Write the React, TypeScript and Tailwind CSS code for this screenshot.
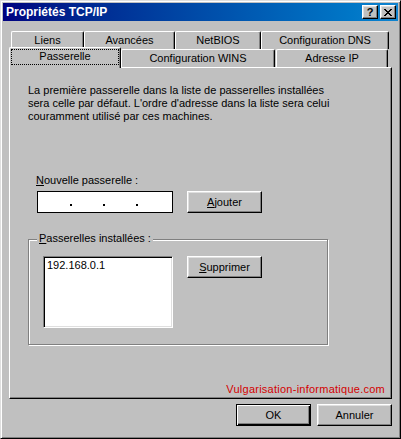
import React from 'react';

const raised =
  'border border-t-white border-l-white border-r-black border-b-black shadow-[inset_-1px_-1px_0_#808080,inset_1px_1px_0_#dfdfdf]';
const sunken =
  'border border-t-[#808080] border-l-[#808080] border-r-white border-b-white shadow-[inset_1px_1px_0_#000,inset_-1px_-1px_0_#dfdfdf]';

const Button = ({ children, isDefault = false, className = '' }: { children: React.ReactNode; isDefault?: boolean; className?: string }) => (
  <button
    className={`flex items-center justify-center bg-[#c0c0c0] text-black text-[11px] leading-[13px] ${
      isDefault
        ? 'border border-black shadow-[inset_1px_1px_0_white,inset_-1px_-1px_0_#000,inset_-2px_-2px_0_#808080]'
        : raised
    } ${className}`}
  >
    {children}
  </button>
);

// onglets arrière / avant
const backTabs = [
  { label: 'Liens', w: 'w-[73px]' },
  { label: 'Avancées', w: 'w-[91px]' },
  { label: 'NetBIOS', w: 'w-[86px]' },
  { label: 'Configuration DNS', w: 'w-[128px]' },
];

const tabCls =
  'flex items-center justify-center h-[18px] bg-[#c0c0c0] border-l border-t border-r border-l-white border-t-white border-r-black rounded-tl-[2px] rounded-tr-[2px] shadow-[inset_-1px_0_0_#808080] text-[11px] leading-[13px]';

export default function App() {
  return (
    <div
      className="w-[401px] h-[439px] bg-[#c0c0c0] border border-t-[#dfdfdf] border-l-[#dfdfdf] border-r-black border-b-black shadow-[inset_1px_1px_0_white,inset_-1px_-1px_0_#808080] p-[2px] flex flex-col text-black"
      style={{ fontFamily: '"Liberation Sans", Arial, sans-serif' }}
    >
      {/* barre de titre */}
      <div className="h-[18px] bg-linear-to-r from-[#000080] to-[#1084d0] flex items-center justify-between pl-[3px] pr-[2px]">
        <span className="text-white font-bold text-[12px] leading-[14px]">Propriétés TCP/IP</span>
        <div className="flex items-center gap-[2px]">
          <div className={`w-[16px] h-[14px] bg-[#c0c0c0] ${raised} flex items-center justify-center text-[11px] font-bold leading-none`}>?</div>
          <div className={`w-[16px] h-[14px] bg-[#c0c0c0] ${raised} flex items-center justify-center`}>
            <svg width="8" height="7" viewBox="0 0 8 7" shapeRendering="crispEdges">
              <path d="M0 0h2v1h-2zM6 0h2v1h-2zM1 1h2v1h-2zM5 1h2v1h-2zM2 2h4v1h-4zM3 3h2v1h-2zM2 4h4v1h-4zM1 5h2v1h-2zM5 5h2v1h-2zM0 6h2v1h-2zM6 6h2v1h-2z" fill="#000" />
            </svg>
          </div>
        </div>
      </div>

      <div className="flex-1 flex flex-col px-[6px] pt-[10px]">
        {/* onglets */}
        <div className="flex pl-[2px] h-[18px]">
          {backTabs.map((t) => (
            <div key={t.label} className={`${tabCls} ${t.w}`}>{t.label}</div>
          ))}
        </div>
        <div className="flex items-end h-[18px]">
          <div className="relative z-10 -mb-[1px] w-[112px] h-[21px] bg-[#c0c0c0] border-l border-t border-r border-l-white border-t-white border-r-black rounded-t-[2px] shadow-[inset_-1px_0_0_#808080] flex items-start justify-center pt-[1px] px-[1px]">
            <span className="w-full h-[16px] border border-dotted border-black flex items-center justify-center text-[11px] leading-[13px] pb-[2px]">Passerelle</span>
          </div>
          <div className={`${tabCls} w-[154px]`}>Configuration WINS</div>
          <div className={`${tabCls} w-[112px] ml-[1px]`}>Adresse IP</div>
        </div>

        {/* panneau */}
        <div className="w-[383px] h-[332px] border border-t-white border-l-white border-r-black border-b-black shadow-[inset_-1px_-1px_0_#808080] flex flex-col pl-[18px] pt-[16px] text-[11px] leading-[13px]">
          <p>
            La première passerelle dans la liste de passerelles installées
            <br />
            sera celle par défaut. L'ordre d'adresse dans la liste sera celui
            <br />
            couramment utilisé par ces machines.
          </p>

          <div className="mt-[51px] ml-[8px]">
            <u>N</u>ouvelle passerelle :
          </div>
          <div className="flex mt-[4px] ml-[9px]">
            <div className="w-[136px] h-[22px] bg-white border border-black flex items-center pl-[32px] gap-[31px] text-[11px] leading-none">
              <span className="w-[2px] h-[2px] bg-black mt-[5px]" />
              <span className="w-[2px] h-[2px] bg-black mt-[5px]" />
              <span className="w-[2px] h-[2px] bg-black mt-[5px]" />
            </div>
            <Button className="w-[75px] h-[22px] ml-[14px]">
              <span><u>A</u>jouter</span>
            </Button>
          </div>

          {/* groupe passerelles installées */}
          <div className="relative mt-[26px] w-[300px] h-[106px] border border-[#808080] shadow-[inset_1px_1px_0_white,1px_1px_0_white] pl-[14px] pt-[16px] flex">
            <span className="absolute -top-[8px] left-[8px] bg-[#c0c0c0] px-[2px]">
              <u>P</u>asserelles installées :
            </span>
            <div className={`w-[130px] h-[72px] bg-white ${sunken} pl-[3px] pt-[2px]`}>192.168.0.1</div>
            <Button className="w-[75px] h-[22px] ml-[14px]">
              <span><u>S</u>upprimer</span>
            </Button>
          </div>

          <div className="mt-auto self-end pr-[6px] pb-[2px] text-[#d40000] text-[11px] leading-[13px] tracking-[0.25px]">
            Vulgarisation-informatique.com
          </div>
        </div>

        {/* boutons */}
        <div className="flex justify-end gap-[6px] mt-[5px]">
          <Button isDefault className="w-[75px] h-[22px]">OK</Button>
          <Button className="w-[75px] h-[22px]">Annuler</Button>
        </div>
      </div>
    </div>
  );
}
